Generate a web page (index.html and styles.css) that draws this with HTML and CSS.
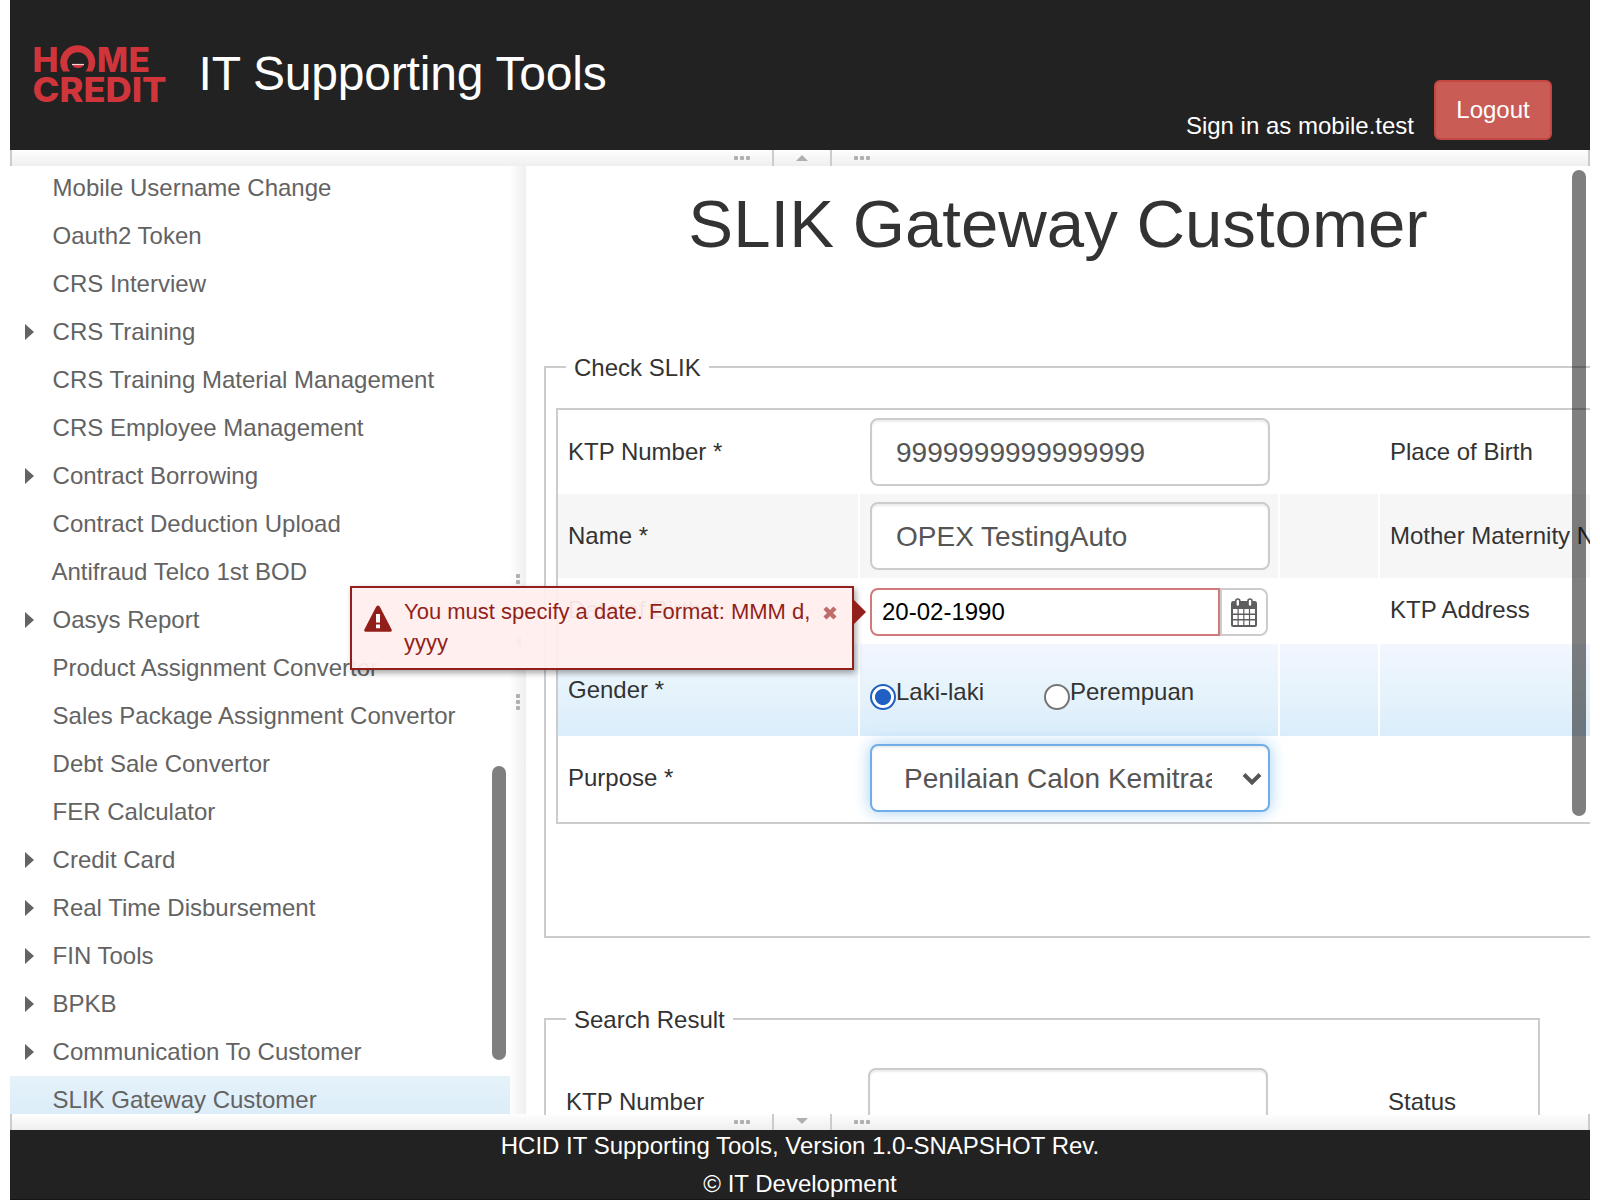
FILE: index.html
```html
<!DOCTYPE html>
<html lang="en">
<head>
<meta charset="utf-8">
<title>IT Supporting Tools</title>
<link rel="stylesheet" href="styles.css">
</head>
<body>
<div class="app">
  <header class="header">
    <svg class="logo" width="136" height="62" viewBox="0 0 136 62" role="img" aria-label="Home Credit">
      <g class="logo-word">
        <text x="0.500" y="28.500" textLength="26" lengthAdjust="spacingAndGlyphs">H</text>
        <text x="65" y="28.500" textLength="31" lengthAdjust="spacingAndGlyphs">M</text>
        <text x="96.500" y="28.500" textLength="21.500" lengthAdjust="spacingAndGlyphs">E</text>
        <text x="0.500" y="59" textLength="134" lengthAdjust="spacingAndGlyphs">CREDIT</text>
      </g>
      <path class="logo-red" d="M31 28.500A17.500 17 0 1 1 60.500 28.500H53.500Q56.500 25 56.500 20A10.600 10.800 0 0 0 35.200 20Q35.200 25 38 28.500Z"/>
      <path class="logo-red" d="M40 21.500H52A6.300 5 0 0 1 40 21.500Z"/>
      <path class="logo-line" d="M40 21.500H52"/>
    </svg>
    <div class="app-title">IT Supporting Tools</div>
    <div class="account">
      <span class="signed">Sign in as mobile.test</span>
      <button class="logout">Logout</button>
    </div>
  </header>

  <div class="split-h">
    <span class="dots"><i></i><i></i><i></i></span>
    <span class="split-btn"><b class="up"></b></span>
    <span class="dots"><i></i><i></i><i></i></span>
  </div>

  <div class="middle">
    <nav class="menu">
      <div class="item">Mobile Username Change</div>
      <div class="item">Oauth2 Token</div>
      <div class="item">CRS Interview</div>
      <div class="item parent">CRS Training</div>
      <div class="item">CRS Training Material Management</div>
      <div class="item">CRS Employee Management</div>
      <div class="item parent">Contract Borrowing</div>
      <div class="item">Contract Deduction Upload</div>
      <div class="item outdent">Antifraud Telco 1st BOD</div>
      <div class="item parent">Oasys Report</div>
      <div class="item">Product Assignment Convertor</div>
      <div class="item">Sales Package Assignment Convertor</div>
      <div class="item">Debt Sale Convertor</div>
      <div class="item">FER Calculator</div>
      <div class="item parent">Credit Card</div>
      <div class="item parent">Real Time Disbursement</div>
      <div class="item parent">FIN Tools</div>
      <div class="item parent">BPKB</div>
      <div class="item parent">Communication To Customer</div>
      <div class="item selected">SLIK Gateway Customer</div>
      <div class="thumb menu-thumb"></div>
    </nav>

    <div class="split-v">
      <span class="dots"><i></i><i></i><i></i></span>
      <span class="split-btn"><b class="left"></b></span>
      <span class="dots"><i></i><i></i><i></i></span>
    </div>

    <main class="main">
      <h1>SLIK Gateway Customer</h1>

      <fieldset class="box check">
        <legend>Check SLIK</legend>
        <div class="grid">
          <div class="row r1">
            <div class="cell">KTP Number *</div>
            <div class="cell"><div class="input">9999999999999999</div></div>
            <div class="cell"></div>
            <div class="cell">Place of Birth</div>
          </div>
          <div class="row r2">
            <div class="cell">Name *</div>
            <div class="cell"><div class="input">OPEX TestingAuto</div></div>
            <div class="cell"></div>
            <div class="cell">Mother Maternity Name</div>
          </div>
          <div class="row r3">
            <div class="cell">Date of Birth *</div>
            <div class="cell field-date">
              <div class="date">20-02-1990</div>
              <div class="date-btn">
                <svg width="26" height="30" viewBox="0 0 26 30">
                  <path d="M2.5 3H23.5Q26 3 26 5.500V27Q26 29 24 29H2Q0 29 0 27V5.500Q0 3 2.500 3Z" fill="#5e5e5e"/>
                  <path d="M2 11h4.500v4.500H2zM7.700 11h4.500v4.500H7.700zM13.400 11h4.500v4.500h-4.500zM19.100 11H24v4.500h-4.900zM2 17h4.500v4H2zM7.700 17h4.500v4H7.700zM13.400 17h4.500v4h-4.500zM19.100 17H24v4h-4.900zM2 22.500h4.500v4.500H2zM7.700 22.500h4.500v4.500H7.700zM13.400 22.500h4.500v4.500h-4.500zM19.100 22.500H24v4.500h-4.900z" fill="#fff"/>
                  <rect x="4.800" y="1" width="4" height="7.500" rx="2" fill="#fff" stroke="#5e5e5e" stroke-width="1.600"/>
                  <rect x="17" y="1" width="4" height="7.500" rx="2" fill="#fff" stroke="#5e5e5e" stroke-width="1.600"/>
                </svg>
              </div>
              <div class="error">
                <svg class="warn" width="28" height="27" viewBox="0 0 28 27">
                  <path d="M14 .5Q15.300 .5 16 2L27.600 24.500Q28.500 26.800 26 26.800H2Q-.5 26.800 .4 24.500L12 2Q12.700 .5 14 .5Z" fill="#931f1a"/>
                  <path d="M12 9h4v8.500h-4zM12 19.500h4v3.800h-4z" fill="#fff"/>
                </svg>
                <p>You must specify a date. Format: MMM d,<br>yyyy</p>
                <svg class="close" width="14" height="14" viewBox="0 0 14 14"><path d="M2 2L12 12M12 2L2 12" stroke="#bf6c6a" stroke-width="4.400"/></svg>
                <span class="pointer"></span>
              </div>
            </div>
            <div class="cell"></div>
            <div class="cell">KTP Address</div>
          </div>
          <div class="row r4">
            <div class="cell">Gender *</div>
            <div class="cell radios">
              <span class="radio on"></span><span class="opt first">Laki-laki</span>
              <span class="radio"></span><span class="opt">Perempuan</span>
            </div>
            <div class="cell"></div>
            <div class="cell"></div>
          </div>
          <div class="row r5">
            <div class="cell">Purpose *</div>
            <div class="cell">
              <div class="input select"><span>Penilaian Calon Kemitraan</span>
                <svg width="20" height="14" viewBox="0 0 20 14"><path d="M2 2.500L10 10.500L18 2.500" fill="none" stroke="#555" stroke-width="4"/></svg>
              </div>
            </div>
            <div class="cell"></div>
            <div class="cell"></div>
          </div>
        </div>
      </fieldset>

      <fieldset class="box result">
        <legend>Search Result</legend>
        <div class="result-row">
          <div class="name">KTP Number</div>
          <div class="input"></div>
          <div class="status">Status</div>
        </div>
      </fieldset>
      <div class="thumb main-thumb"></div>
    </main>
  </div>

  <div class="split-h">
    <span class="dots"><i></i><i></i><i></i></span>
    <span class="split-btn"><b class="down"></b></span>
    <span class="dots"><i></i><i></i><i></i></span>
  </div>

  <footer class="footer">
    <div>HCID IT Supporting Tools, Version 1.0-SNAPSHOT Rev.</div>
    <div>© IT Development</div>
  </footer>
</div>
</body>
</html>
```
FILE: styles.css
```css
* { box-sizing: border-box; }

body {
  margin: 0;
  background: #fff;
  font-family: "Liberation Sans", Arial, sans-serif;
  font-size: 24px;
  color: #333;
  overflow: hidden;
}

.app {
  width: 1580px;
  height: 1200px;
  margin: 0 10px;
  display: flex;
  flex-direction: column;
  overflow: hidden;
}

/* header */
.header {
  height: 150px;
  flex: none;
  background: #222;
  color: #fff;
  display: flex;
  align-items: flex-start;
}
.logo { margin: 43px 0 0 22px; flex: none; }
.logo-word {
  font-family: Inter, "Open Sans", sans-serif;
  font-weight: 800;
  font-size: 34.5px;
  fill: #d0353b;
}
.logo-red { fill: #d0353b; }
.logo-line { stroke: #f3d5d6; stroke-width: 1.2; }
.app-title {
  margin: 46px 0 0 30.5px;
  font-size: 48px;
  line-height: 55px;
  letter-spacing: -.2px;
  white-space: nowrap;
}
.account {
  margin: 80px 38px 0 auto;
  display: flex;
  gap: 20px;
}
.signed { line-height: 28px; padding-top: 32px; white-space: nowrap; }
.logout {
  width: 118px;
  height: 60px;
  padding: 0;
  border: 2px solid #c44741;
  border-radius: 6px;
  background: #c95c55;
  color: #fff;
  font: 24px "Liberation Sans", Arial, sans-serif;
}

/* splitters */
.split-h {
  height: 16px;
  flex: none;
  display: flex;
  justify-content: center;
  gap: 22px;
  padding-left: 4px;
  border: solid #ccc;
  border-width: 0 2px;
  background: linear-gradient(#fefefe, #efefef);
}
.split-h .dots { padding-top: 6px; display: flex; gap: 2px; }
.dots i { width: 4px; height: 4px; border-radius: 1px; background: #afafaf; }
.split-h .split-btn {
  width: 60px;
  border: solid #ccc;
  border-width: 0 2px;
  display: flex;
  justify-content: center;
}
.split-btn b { width: 0; height: 0; border: 6px solid transparent; }
.split-btn .up { border-bottom-color: #afafaf; border-top: 0; margin-top: 5px; }
.split-btn .down { border-top-color: #afafaf; border-bottom: 0; margin-top: 4px; }
.split-v {
  width: 16px;
  flex: none;
  display: flex;
  flex-direction: column;
  justify-content: center;
  align-items: center;
  gap: 22px;
  padding-top: 4px;
  background: linear-gradient(90deg, #fefefe, #efefef);
}
.split-v .dots { display: flex; flex-direction: column; gap: 2px; }
.split-v .split-btn {
  width: 16px;
  height: 56px;
  margin: 2px 0;
  display: flex;
  align-items: center;
  padding-left: 5px;
}
.split-btn .left { border-right-color: #afafaf; border-left: 0; }

/* menu */
.middle { height: 948px; flex: none; display: flex; }
.menu {
  position: relative;
  width: 500px;
  flex: none;
  overflow: hidden;
  color: #636363;
}
.item {
  height: 48px;
  padding-left: 42.6px;
  line-height: 48px;
  white-space: nowrap;
}
.item.outdent { padding-left: 41.4px; }
.item:first-child { margin-top: -2px; }
.item.parent { display: flex; align-items: center; padding-left: 15px; }
.parent::before {
  content: "";
  width: 0;
  height: 0;
  margin-right: 18.6px;
  border: 8px solid transparent;
  border-left: 9px solid #636363;
  border-right: 0;
}
.selected { background: linear-gradient(#e5f2f9, #d9ecf9); }
.thumb {
  position: absolute;
  width: 14px;
  border-radius: 7px;
  background: rgba(0, 0, 0, .5);
}
.menu-thumb { right: 4px; top: 600px; height: 294px; }
.main-thumb { right: 4px; top: 4px; height: 646px; }

/* content */
.main {
  position: relative;
  width: 1064px;
  flex: none;
  height: 948px;
}
h1 {
  margin: 0;
  padding-top: 18px;
  height: 191px;
  font-size: 67.2px;
  line-height: 79px;
  font-weight: 400;
  text-align: center;
}
.box {
  margin: 0 0 0 18px;
  padding: 0;
  min-width: 0;
  border: 2px solid #ccc;
}
.check { width: 1046px; height: 581px; border-right: 0; }
legend {
  height: 20px;
  margin-left: 20px;
  padding: 1px 8px 0;
  line-height: 20px;
  white-space: nowrap;
}
.grid {
  margin: 31px 0 0 10px;
  height: 416px;
  border: 2px solid #ccc;
  border-right: 0;
}
.row { display: grid; grid-template-columns: 300px 418px 98px minmax(0, 1fr); column-gap: 2px; }
.cell { padding: 0 10px; display: flex; align-items: center; white-space: nowrap; }
.cell:last-child { overflow: hidden; }
.r1, .r2 { height: 84px; }
.r3 { height: 66px; }
.r4 { height: 92px; }
.r5 { height: 86px; }
.r2 .cell { background: #f6f6f6; }
.r3 .cell { padding-bottom: 2px; }
.r4 .cell { background: linear-gradient(#f2f6ff, #e6f3fb 50%, #daedfb); }
.r5 .cell { padding-bottom: 2px; }
.input {
  width: 400px;
  height: 68px;
  flex: none;
  border: 2px solid #ccc;
  border-radius: 8px;
  padding: 1px 24px 0;
  display: flex;
  align-items: center;
  background: #fff;
  box-shadow: inset 0 2px 2px rgba(0, 0, 0, .075);
  font-size: 28px;
  color: #555;
}
.r3 .field-date { position: relative; padding-bottom: 0; padding-top: 2px; }
.date {
  width: 350px;
  height: 48px;
  border: 2px solid #d07a79;
  border-radius: 8px 0 0 8px;
  padding-left: 10px;
  line-height: 43px;
  color: #000;
}
.date-btn {
  width: 48px;
  height: 48px;
  border: 2px solid #ccc;
  border-radius: 0 8px 8px 0;
  padding: 1px 0 0;
  display: flex;
  align-items: center;
  justify-content: center;
}
.radios { align-items: flex-start; padding-top: 32px; }
.radio {
  width: 26px;
  height: 26px;
  margin-top: 8px;
  flex: none;
  border: 2px solid #767676;
  border-radius: 50%;
  background: #fff;
}
.radio.on { border-color: #205fc4; background: radial-gradient(circle, #205fc4 7.6px, #fff 8.4px); }
.opt { line-height: 32px; }
.opt.first { width: 148px; }
.select {
  border-color: #71ade8;
  padding: 1px 6px 0 32px;
  justify-content: space-between;
  box-shadow: inset 0 2px 2px rgba(0, 0, 0, .075), 0 0 16px rgba(102, 175, 233, .6);
}
.select span { width: 308px; overflow: hidden; }

/* validation bubble */
.error {
  position: absolute;
  z-index: 2;
  left: -510px;
  top: 8px;
  width: 504px;
  height: 84px;
  border: 2px solid #931f1a;
  background: rgba(255, 239, 238, .94);
  box-shadow: 2px 3px 6px rgba(0, 0, 0, .35);
  display: flex;
  padding: 9px 15px 0 12px;
  color: #931f1a;
}
.error p {
  width: 410px;
  margin: 0 0 0 12px;
  font-size: 22px;
  line-height: 30.5px;
  white-space: nowrap;
}
.warn { margin-top: 8px; flex: none; }
.close { margin: 9px 0 0 auto; flex: none; }
.pointer {
  position: absolute;
  left: 502px;
  top: 12px;
  border: 12px solid transparent;
  border-left-color: #931f1a;
  border-right: 0;
}

/* search result */
.result { width: 996px; height: 106px; margin-top: 71px; border-bottom: 0; overflow: hidden; }
.result-row { display: flex; align-items: center; height: 68px; margin: 39px 0 0 20px; white-space: nowrap; }
.result-row .name { width: 302px; }
.result-row .status { margin-left: 120px; }

/* footer */
.footer {
  flex: 1;
  background: #222;
  color: #fff;
  text-align: center;
  line-height: 38px;
  border-bottom: 1px solid #1b1416;
  overflow: hidden;
}
.footer div:first-child { margin-top: -3px; }
```
